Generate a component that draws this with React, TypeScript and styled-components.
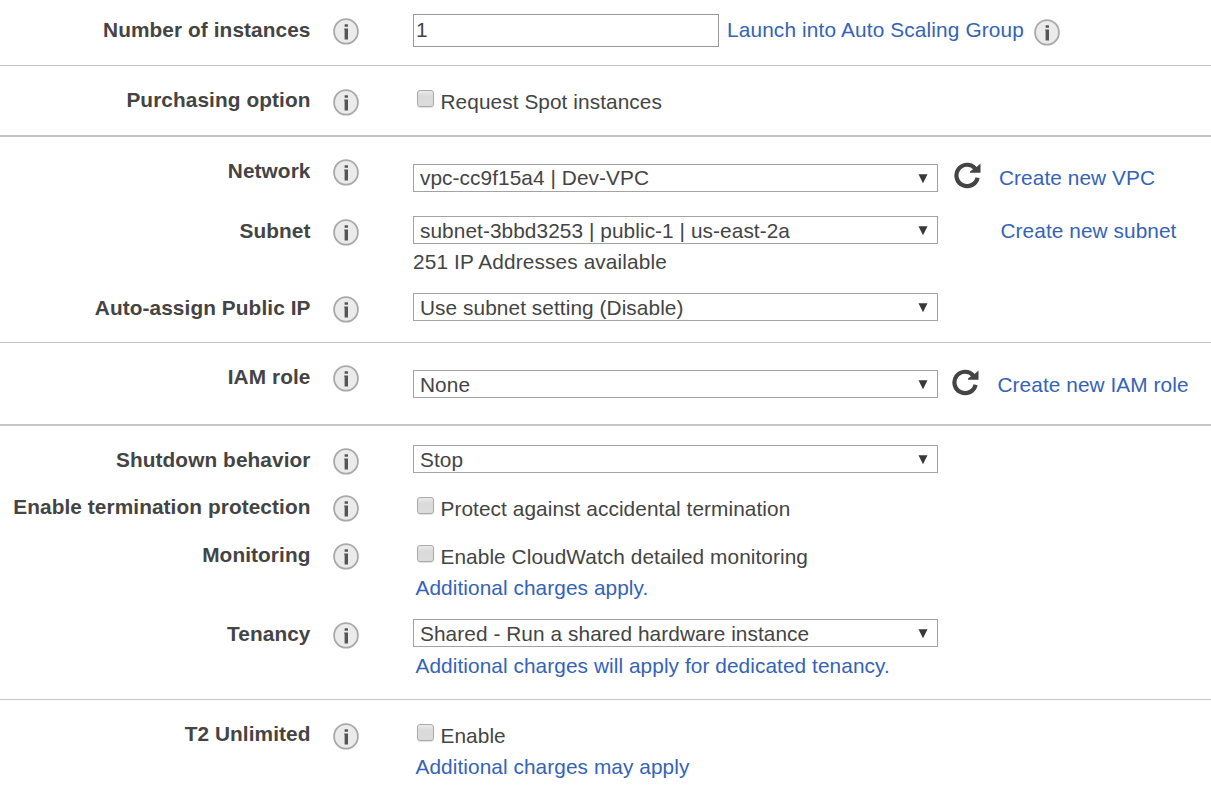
import React from "react";
import styled, { createGlobalStyle } from "styled-components";

const GlobalStyle = createGlobalStyle`
  * { box-sizing: border-box; }
  body {
    margin: 0;
    background: #fff;
    color: #444;
    font-family: "Liberation Sans", Arial, sans-serif;
    font-size: 20.8px;
    line-height: 24px;
    letter-spacing: 0.08px;
  }
`;

const Page = styled.main`
  width: 1211px;
  height: 786px;
  overflow: hidden;
`;

const Section = styled.section<{ $line?: number }>`
  border-bottom: ${(p) => p.$line ?? 0}px solid #c6c6c6;
`;

const Row = styled.div<{ $height: number }>`
  display: grid;
  grid-template-columns: 310.5px 26px 1fr;
  column-gap: 22.5px;
  height: ${(p) => p.$height}px;
`;

const Label = styled.div<{ $top: number }>`
  padding-top: ${(p) => p.$top}px;
  text-align: right;
  font-weight: bold;
  letter-spacing: 0.09px;
  white-space: nowrap;
`;

const IconCell = styled.div<{ $top: number }>`
  padding-top: ${(p) => p.$top}px;
`;

const Controls = styled.div<{ $top: number }>`
  padding-top: ${(p) => p.$top}px;
  margin-left: 31.5px;
`;

const Line = styled.div`
  display: flex;
  align-items: flex-start;
`;

const NumberInput = styled.input`
  width: 306px;
  height: 33px;
  padding: 0 0 1px 2px;
  border: 1px solid #999;
  border-radius: 0;
  background: #fff;
  color: #444;
  font: inherit;
  outline: none;
`;

const SelectBox = styled.div`
  display: flex;
  justify-content: space-between;
  flex: none;
  width: 525px;
  height: 28px;
  padding: 0 9px 0 6px;
  border: 1px solid #a3a3a3;
  background: #fff;
  line-height: 26px;
  white-space: nowrap;
`;

const SelectText = styled.span<{ $drop: number }>`
  padding-top: ${(p) => p.$drop}px;
`;

const Arrow = styled.svg`
  display: block;
  margin-top: 9px;
`;

const Link = styled.a<{ $left?: number; $top?: number; $spacing?: number }>`
  display: block;
  margin: ${(p) => p.$top ?? 0}px 0 0 ${(p) => p.$left ?? 0}px;
  color: #3463b8;
  letter-spacing: ${(p) => p.$spacing ?? 0.08}px;
  text-decoration: none;
  white-space: nowrap;
`;

const Note = styled.div`
  margin-top: 6px;
  letter-spacing: 0.13px;
`;

const CheckLabel = styled.label`
  display: flex;
  align-items: flex-start;
  gap: 6.5px;
  padding-left: 4px;
  white-space: nowrap;
`;

const Checkbox = styled.input`
  appearance: none;
  width: 17px;
  height: 17px;
  margin: 0;
  border: 1px solid #aaa;
  border-radius: 3px;
  background: linear-gradient(#eaeaea, #dadada 35%, #dcdcdc);
  box-shadow: 0 1px 1px rgba(0, 0, 0, 0.12);
`;

const InfoSvg = styled.svg<{ $left?: number; $top?: number }>`
  display: block;
  flex: none;
  margin: ${(p) => p.$top ?? 0}px 0 0 ${(p) => p.$left ?? 0}px;
`;

const RefreshSvg = styled.svg<{ $left: number; $top: number }>`
  display: block;
  flex: none;
  margin: ${(p) => p.$top}px 0 0 ${(p) => p.$left}px;
`;

function Info({ left, top }: { left?: number; top?: number }) {
  return (
    <InfoSvg $left={left} $top={top} width="26" height="27" viewBox="0 0 26 27">
      <ellipse cx="13" cy="13.4" rx="11.9" ry="12.3" fill="#ebebeb" stroke="#a9a9a9" strokeWidth="1.8" />
      <rect x="11.6" y="6.3" width="3.4" height="2.4" rx="0.5" fill="#555" />
      <path d="M11.2 10.4H15V21.4H11.6V11.8H11.2Z" fill="#555" />
    </InfoSvg>
  );
}

function Refresh({ left, top = -2 }: { left: number; top?: number }) {
  return (
    <RefreshSvg $left={left} $top={top} width="27" height="27" viewBox="0 0 27 27">
      <path d="M23.6 15.7A10.7 10.7 0 1 1 21.2 6.4" fill="none" stroke="#444" strokeWidth="4.2" />
      <path d="M26.5 1.6V10.8H16V9.6L19 7.2L20 4.8L22.6 5Z" fill="#444" />
    </RefreshSvg>
  );
}

function Select({ text, drop = 1 }: { text: string; drop?: number }) {
  return (
    <SelectBox role="combobox" aria-expanded={false}>
      <SelectText $drop={drop}>{text}</SelectText>
      <Arrow width="10" height="10" viewBox="0 0 10 10">
        <path d="M0.5 0.3H9.5L5 9.3Z" fill="#383838" />
      </Arrow>
    </SelectBox>
  );
}

function Check({ text }: { text: string }) {
  return (
    <CheckLabel>
      <Checkbox type="checkbox" />
      <span>{text}</span>
    </CheckLabel>
  );
}

interface FieldProps {
  label: string;
  height: number;
  labelTop: number;
  iconTop?: number;
  top: number;
  children: React.ReactNode;
}

function Field({ label, height, labelTop, iconTop, top, children }: FieldProps) {
  return (
    <Row $height={height}>
      <Label $top={labelTop}>{label}</Label>
      <IconCell $top={iconTop ?? labelTop}>
        <Info />
      </IconCell>
      <Controls $top={top}>{children}</Controls>
    </Row>
  );
}

export default function App() {
  return (
    <Page>
      <GlobalStyle />
      <Section $line={1}>
        <Field label="Number of instances" height={65} labelTop={18} top={14}>
          <Line>
            <NumberInput defaultValue="1" />
            <Link $left={8} $top={4} $spacing={0.15}>Launch into Auto Scaling Group</Link>
            <Info left={10} top={4.5} />
          </Line>
        </Field>
      </Section>
      <Section $line={2}>
        <Field label="Purchasing option" height={69} labelTop={22} iconTop={22.6} top={24}>
          <Check text="Request Spot instances" />
        </Field>
      </Section>
      <Section $line={1}>
        <Field label="Network" height={69} labelTop={22} top={27}>
          <Line>
            <Select text="vpc-cc9f15a4 | Dev-VPC" drop={0} />
            <Refresh left={16} />
            <Link $left={18} $top={2}>Create new VPC</Link>
          </Line>
        </Field>
        <Field label="Subnet" height={77} labelTop={13} top={10}>
          <Line>
            <Select text="subnet-3bbd3253 | public-1 | us-east-2a" />
            <Link $left={62.5} $top={3}>Create new subnet</Link>
          </Line>
          <Note>251 IP Addresses available</Note>
        </Field>
        <Field label="Auto-assign Public IP" height={59} labelTop={13} top={10}>
          <Select text="Use subnet setting (Disable)" />
        </Field>
      </Section>
      <Section $line={2}>
        <Field label="IAM role" height={81} labelTop={22} top={27}>
          <Line>
            <Select text="None" />
            <Refresh left={14} top={-1} />
            <Link $left={18.5} $top={3}>Create new IAM role</Link>
          </Line>
        </Field>
      </Section>
      <Section $line={1}>
        <Field label="Shutdown behavior" height={59} labelTop={22} top={19}>
          <Select text="Stop" />
        </Field>
        <Field label="Enable termination protection" height={48} labelTop={10} top={12}>
          <Check text="Protect against accidental termination" />
        </Field>
        <Field label="Monitoring" height={76} labelTop={10} top={12}>
          <Check text="Enable CloudWatch detailed monitoring" />
          <Link $left={2.5} $top={7}>Additional charges apply.</Link>
        </Field>
        <Field label="Tenancy" height={90} labelTop={13} top={10}>
          <Select text="Shared - Run a shared hardware instance" />
          <Link $left={2.5} $top={7}>Additional charges will apply for dedicated tenancy.</Link>
        </Field>
      </Section>
      <Section>
        <Field label="T2 Unlimited" height={86} labelTop={22} iconTop={22.6} top={24}>
          <Check text="Enable" />
          <Link $left={2.5} $top={7}>Additional charges may apply</Link>
        </Field>
      </Section>
    </Page>
  );
}
